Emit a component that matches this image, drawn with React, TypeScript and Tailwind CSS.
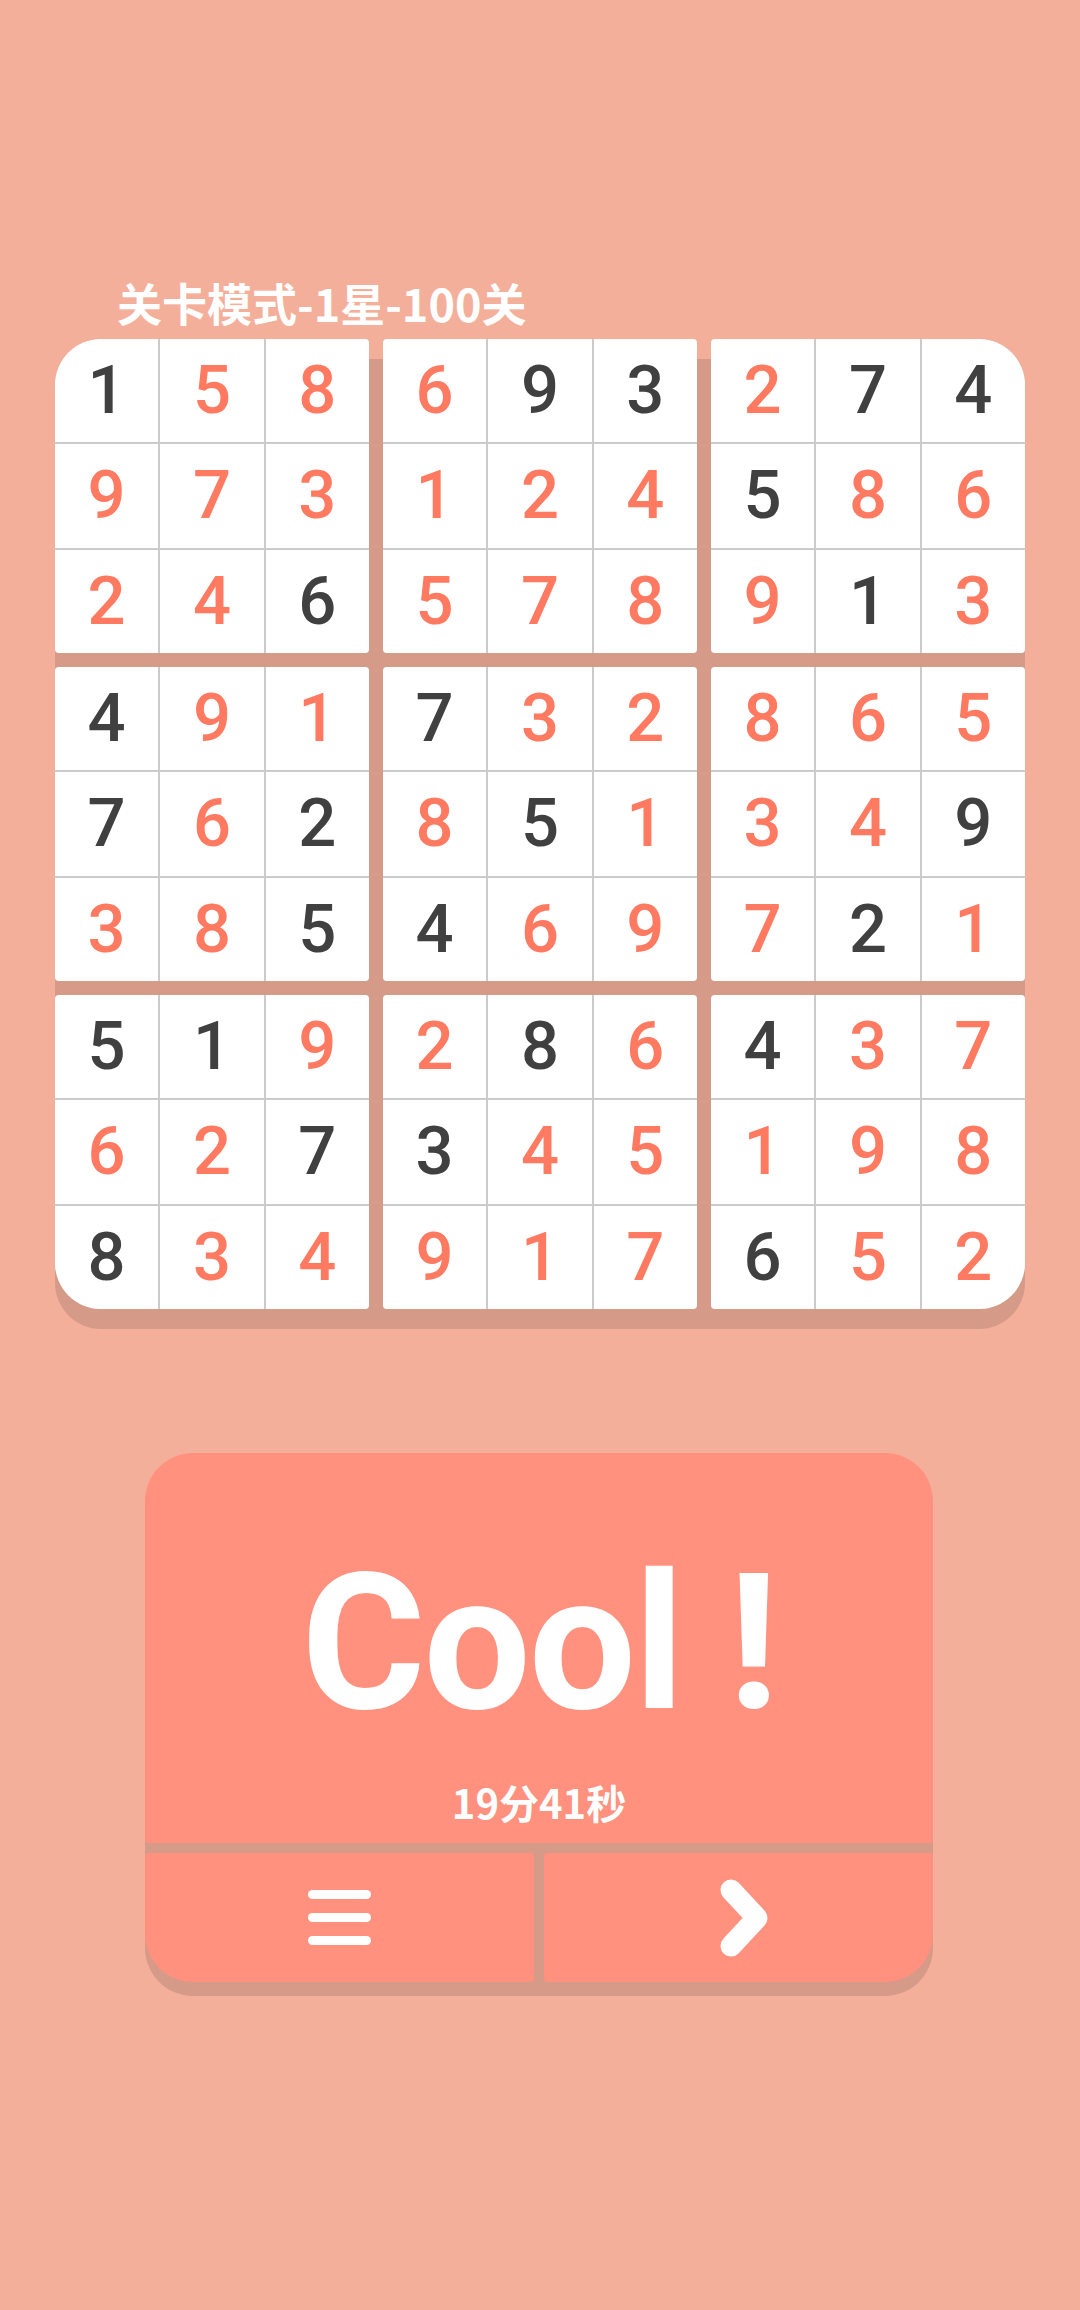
// SUDOKU RESULT PAGE
import React from 'react';

const board = [
  ['1d', '5r', '8r', '6r', '9d', '3d', '2r', '7d', '4d'],
  ['9r', '7r', '3r', '1r', '2r', '4r', '5d', '8r', '6r'],
  ['2r', '4r', '6d', '5r', '7r', '8r', '9r', '1d', '3r'],
  ['4d', '9r', '1r', '7d', '3r', '2r', '8r', '6r', '5r'],
  ['7d', '6r', '2d', '8r', '5d', '1r', '3r', '4r', '9d'],
  ['3r', '8r', '5d', '4d', '6r', '9r', '7r', '2d', '1r'],
  ['5d', '1d', '9r', '2r', '8d', '6r', '4d', '3r', '7r'],
  ['6r', '2r', '7d', '3d', '4r', '5r', '1r', '9r', '8r'],
  ['8d', '3r', '4r', '9r', '1r', '7r', '6d', '5r', '2r']
];

// corner rounding per 3x3 box
const boxCorners = [
  'rounded-[4px] rounded-tl-[46px]',
  'rounded-[4px]',
  'rounded-[4px] rounded-tr-[46px]',
  'rounded-[4px]',
  'rounded-[4px]',
  'rounded-[4px]',
  'rounded-[4px] rounded-bl-[46px]',
  'rounded-[4px]',
  'rounded-[4px] rounded-br-[46px]'
];

function Box({ index }: { index: number }) {
  const br = Math.floor(index / 3) * 3;
  const bc = (index % 3) * 3;
  const cells: string[] = [];
  for (let r = 0; r < 3; r++) {
    for (let c = 0; c < 3; c++) {
      cells.push(board[br + r][bc + c]);
    }
  }
  return (
    <div className={`grid grid-cols-3 grid-rows-3 gap-[2px] h-[314px] overflow-hidden bg-[#cbcbcb] ${boxCorners[index]}`}>
      {cells.map((cell, i) => (
        <div
          key={i}
          className={`flex items-center justify-center bg-white text-[67px] leading-none font-medium ${
            cell[1] === 'r' ? 'text-[#ff7a60]' : 'text-[#404040]'
          }`}
        >
          {cell[0]}
        </div>
      ))}
    </div>
  );
}

export default function App() {
  return (
    <div className="w-[1080px] h-[2310px] bg-[#f4af9b] overflow-hidden" style={{ fontFamily: 'Roboto, "Noto Sans CJK SC", sans-serif' }}>
      <div className="pt-[280px] pl-[117px] h-[324px]">
        <div className="text-[45px] leading-[45px] font-bold text-white" style={{ fontFamily: '"Noto Sans CJK SC", sans-serif' }}>
          关卡模式-1星-100关
        </div>
      </div>

      <div className="relative ml-[55px] mt-[15px] w-[970px]">
        <div className="absolute inset-x-0 top-[20px] -bottom-[20px] rounded-[46px] bg-[#d69a88]" />
        <div className="relative grid grid-cols-3 gap-[14px]">
          {[0, 1, 2, 3, 4, 5, 6, 7, 8].map(i => (
            <Box key={i} index={i} />
          ))}
        </div>
      </div>

      <div className="relative ml-[145px] mt-[144px] w-[788px]">
        <div className="absolute inset-x-0 top-[14px] -bottom-[14px] rounded-[48px] bg-[#d69a88]" />
        <div className="relative flex flex-col gap-[10px]">
          <div className="h-[390px] bg-[#ff917e] rounded-[4px] rounded-t-[48px] flex flex-col items-center">
            <div className="pt-[95px] text-[190px] leading-none font-bold tracking-[-2px] text-white">Cool !</div>
            <div className="mt-[44px] text-[40px] leading-[40px] font-bold text-white" style={{ fontFamily: '"Noto Sans CJK SC", sans-serif' }}>
              19分41秒
            </div>
          </div>
          <div className="grid grid-cols-2 gap-[10px] h-[129px]">
            <div className="bg-[#ff917e] rounded-[4px] rounded-bl-[48px] flex items-center justify-center">
              <div className="flex flex-col gap-[14px]">
                <div className="w-[63px] h-[9px] rounded-full bg-white" />
                <div className="w-[63px] h-[9px] rounded-full bg-white" />
                <div className="w-[63px] h-[9px] rounded-full bg-white" />
              </div>
            </div>
            <div className="bg-[#ff917e] rounded-[4px] rounded-br-[48px] flex items-center justify-center">
              <svg width="64" height="96" viewBox="0 0 64 96" className="ml-[8px]">
                <polyline points="20,20 46,48 20,76" fill="none" stroke="white" strokeWidth="21" strokeLinecap="round" strokeLinejoin="round" />
              </svg>
            </div>
          </div>
        </div>
      </div>
    </div>
  );
}
